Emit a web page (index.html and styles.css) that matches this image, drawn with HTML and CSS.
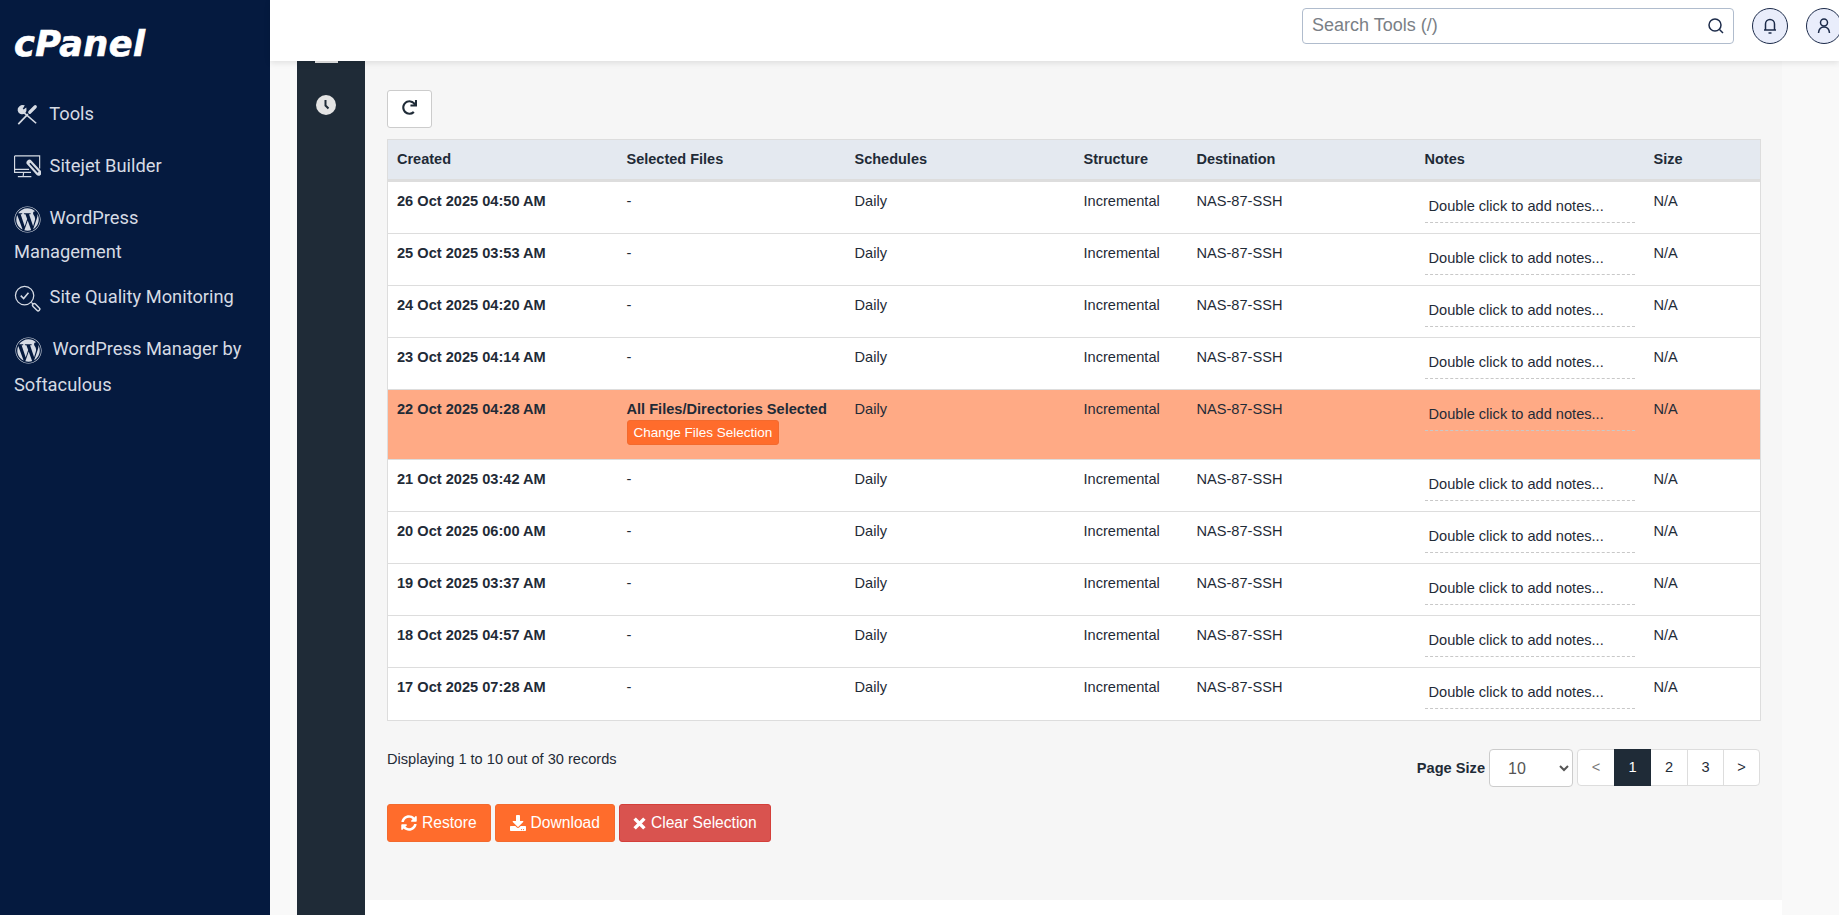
FILE: index.html
```html
<!DOCTYPE html>
<html lang="en">

<head>
    <meta charset="UTF-8">
    <meta name="viewport" content="width=device-width, initial-scale=1.0">
    <title>Backups</title>
    <link rel="stylesheet" href="styles.css">
</head>

<body>
    <aside class="sidebar">
        <div class="logo">cPanel</div>
        <nav class="nav">
            <a class="nav-item" href="#">
                <svg class="nav-icon tools" viewBox="0 0 24 24" fill="none" stroke="currentColor" stroke-width="1.800">
                    <path d="M7 8l15 13"/>
                    <path d="M2.500 22 13 11"/>
                    <path d="M15 9l6-6" stroke-width="3.500" stroke-linecap="round"/>
                    <path d="M8.500 2C5 1.500 2 4 2.500 7c.5 3 4.500 4.500 7 2.500 1.500-1.200 1.500-3 1.200-4.500L8 7 6.500 5.500z" stroke-width="1.400" fill="currentColor"/>
                </svg>
                Tools
            </a>
            <a class="nav-item" href="#">
                <svg class="nav-icon" viewBox="0 0 28 26" fill="none" stroke="currentColor" stroke-width="1.200">
                    <path d="M.6 1h26v13M.6 1v17h17"/>
                    <path d="M.6 15h15M10 18l-.5 4M4 22.500h14"/>
                    <path d="M16 8l9.500 10.500" stroke-width="6" stroke-linecap="round"/>
                    <path d="M16.500 8.500l8.500 9.500" stroke="#051a3f" stroke-width="1.500"/>
                </svg>
                Sitejet Builder
            </a>
            <a class="nav-item" href="#">
                <svg class="nav-icon" viewBox="0 0 512 512" fill="currentColor"><path d="M61.7 169.4l101.500 278C92.200 413 43.300 340.200 43.300 256c0-30.900 6.600-60.100 18.400-86.600zm337.900 75.900c0-26.300-9.400-44.500-17.500-58.700-10.800-17.500-20.900-32.400-20.900-49.900 0-19.600 14.800-37.800 35.700-37.800.9 0 1.800.1 2.800.2-37.900-34.700-88.300-55.900-143.700-55.900-74.300 0-139.700 38.100-177.800 95.900 5 .2 9.700.3 13.700.3 22.200 0 56.700-2.700 56.700-2.700 11.500-.7 12.800 16.200 1.400 17.500 0 0-11.500 1.400-24.300 2l77.500 230.400L249.800 247l-33.100-90.800c-11.500-.7-22.300-2-22.300-2-11.500-.7-10.100-18.200 1.300-17.500 0 0 35.100 2.700 56 2.700 22.200 0 56.700-2.700 56.700-2.700 11.500-.7 12.800 16.200 1.400 17.500 0 0-11.500 1.300-24.300 2l76.900 228.700 21.200-70.900c9-29.400 16-50.500 16-68.700zm-139.900 29.400l-63.800 185.500c19.100 5.600 39.200 8.700 60.100 8.700 24.800 0 48.500-4.300 70.600-12.100-.6-.9-1.100-1.900-1.500-2.900l-65.400-179.200zm183-120.700c.9 6.800 1.400 14 1.400 21.900 0 21.600-4 45.800-16.200 76.200l-65 187.900C426.200 403 468.700 334.500 468.700 256c0-37-9.400-71.800-26-102.100zM504 256c0 136.800-111.300 248-248 248C119.200 504 8 392.700 8 256 8 119.200 119.200 8 256 8c136.700 0 248 111.200 248 248zm-11.400 0c0-130.500-106.200-236.600-236.600-236.600C125.500 19.400 19.400 125.500 19.400 256S125.600 492.600 256 492.600c130.500 0 236.600-106.100 236.600-236.600z"/></svg>
                WordPress<span class="wrap">Management</span>
            </a>
            <a class="nav-item" href="#">
                <svg class="nav-icon" viewBox="0 0 28 28" fill="none" stroke="currentColor" stroke-width="1.300">
                    <circle cx="11" cy="11" r="9.500"/>
                    <path d="M7 11l3 3 5-6" stroke-width="1.600"/>
                    <path d="M18 18l2 2"/>
                    <path d="M21 21l4 4" stroke-width="5" stroke-linecap="round"/>
                    <path d="M21 21l4 4" stroke="#051a3f" stroke-width="2" stroke-linecap="round"/>
                </svg>
                Site Quality Monitoring
            </a>
            <a class="nav-item" href="#">
                <svg class="nav-icon wp-wide" viewBox="0 0 512 512" fill="currentColor"><path d="M61.7 169.4l101.500 278C92.200 413 43.300 340.200 43.300 256c0-30.900 6.600-60.100 18.400-86.600zm337.900 75.900c0-26.300-9.400-44.500-17.500-58.700-10.800-17.500-20.900-32.400-20.900-49.900 0-19.600 14.800-37.800 35.700-37.800.9 0 1.800.1 2.800.2-37.900-34.700-88.300-55.900-143.700-55.900-74.300 0-139.700 38.100-177.800 95.900 5 .2 9.700.3 13.700.3 22.200 0 56.700-2.700 56.700-2.700 11.500-.7 12.800 16.200 1.400 17.500 0 0-11.500 1.400-24.300 2l77.500 230.400L249.800 247l-33.100-90.800c-11.500-.7-22.300-2-22.300-2-11.500-.7-10.100-18.200 1.300-17.500 0 0 35.100 2.700 56 2.700 22.200 0 56.700-2.700 56.700-2.700 11.500-.7 12.800 16.200 1.400 17.500 0 0-11.500 1.300-24.300 2l76.900 228.700 21.200-70.900c9-29.400 16-50.500 16-68.700zm-139.900 29.400l-63.800 185.500c19.100 5.600 39.200 8.700 60.100 8.700 24.800 0 48.500-4.300 70.600-12.100-.6-.9-1.100-1.900-1.500-2.900l-65.400-179.200zm183-120.700c.9 6.800 1.400 14 1.400 21.900 0 21.600-4 45.800-16.200 76.200l-65 187.900C426.200 403 468.700 334.500 468.700 256c0-37-9.400-71.800-26-102.100zM504 256c0 136.800-111.300 248-248 248C119.200 504 8 392.700 8 256 8 119.200 119.200 8 256 8c136.700 0 248 111.200 248 248zm-11.400 0c0-130.500-106.200-236.600-236.600-236.600C125.500 19.400 19.400 125.500 19.400 256S125.600 492.600 256 492.600c130.500 0 236.600-106.100 236.600-236.600z"/></svg>
                WordPress Manager by<span class="wrap wrap-low">Softaculous</span>
            </a>
        </nav>
    </aside>

    <div class="main">
        <header class="topbar">
            <div class="search">
                <input class="search-input" type="text" placeholder="Search Tools (/)">
                <svg class="search-icon" viewBox="0 0 18 18" fill="none" stroke="#1c2b4a" stroke-width="1.500"><circle cx="8" cy="8" r="6"/><path d="M12.500 12.500 16 16"/></svg>
            </div>
            <button class="round-btn">
                <svg viewBox="0 0 18 18" fill="none" stroke="#1c2b4a" stroke-width="1.500"><path d="M4.500 13V7a4.500 4.500 0 0 1 9 0v6"/><path d="M3 13h12M7.500 16h3"/></svg>
            </button>
            <button class="round-btn user-btn">
                <svg viewBox="0 0 18 18" fill="none" stroke="#1c2b4a" stroke-width="1.500"><circle cx="9" cy="5.500" r="3.500"/><path d="M3.500 16c.3-3.500 2.500-6 5.500-6s5.200 2.500 5.500 6"/></svg>
            </button>
        </header>

        <div class="content">
            <div class="side-tabs">
                <span class="tab-stub"></span>
                <svg class="tab-clock" viewBox="0 0 20 20"><circle cx="10" cy="10" r="10" fill="#e4e4e4"/><path d="M9.500 5v5.500l3 3" fill="none" stroke="#1f2b37" stroke-width="2"/></svg>
            </div>
            <section class="panel">
                <button class="refresh">
                    <svg viewBox="0 0 512 512" fill="#1f2b37"><path d="M500.330 0h-47.410a12 12 0 0 0-12 12.570l4 82.760A247.420 247.420 0 0 0 256 8C119.340 8 7.900 119.530 8 256.190 8.100 393.070 119.100 504 256 504a247.100 247.100 0 0 0 166.180-63.910 12 12 0 0 0 .48-17.430l-34-34a12 12 0 0 0-16.380-.55A176 176 0 1 1 402.100 157.800l-101.530-4.870a12 12 0 0 0-12.570 12v47.410a12 12 0 0 0 12 12h200.330a12 12 0 0 0 12-12V12a12 12 0 0 0-12-12z"/></svg>
                </button>

                <table class="backups">
                    <colgroup>
                        <col class="c-created"><col class="c-files"><col class="c-sched"><col class="c-struct"><col class="c-dest"><col class="c-notes"><col class="c-size">
                    </colgroup>
                    <thead>
                        <tr><th>Created</th><th>Selected Files</th><th>Schedules</th><th>Structure</th><th>Destination</th><th>Notes</th><th>Size</th></tr>
                    </thead>
                    <tbody>
                        <tr><td class="created">26 Oct 2025 04:50 AM</td><td>-</td><td>Daily</td><td>Incremental</td><td>NAS-87-SSH</td><td><div class="note">Double click to add notes...</div></td><td>N/A</td></tr>
                        <tr><td class="created">25 Oct 2025 03:53 AM</td><td>-</td><td>Daily</td><td>Incremental</td><td>NAS-87-SSH</td><td><div class="note">Double click to add notes...</div></td><td>N/A</td></tr>
                        <tr><td class="created">24 Oct 2025 04:20 AM</td><td>-</td><td>Daily</td><td>Incremental</td><td>NAS-87-SSH</td><td><div class="note">Double click to add notes...</div></td><td>N/A</td></tr>
                        <tr><td class="created">23 Oct 2025 04:14 AM</td><td>-</td><td>Daily</td><td>Incremental</td><td>NAS-87-SSH</td><td><div class="note">Double click to add notes...</div></td><td>N/A</td></tr>
                        <tr class="selected">
                            <td class="created">22 Oct 2025 04:28 AM</td>
                            <td><div class="all-files">All Files/Directories Selected</div><button class="change-btn">Change Files Selection</button></td>
                            <td>Daily</td><td>Incremental</td><td>NAS-87-SSH</td><td><div class="note">Double click to add notes...</div></td><td>N/A</td>
                        </tr>
                        <tr><td class="created">21 Oct 2025 03:42 AM</td><td>-</td><td>Daily</td><td>Incremental</td><td>NAS-87-SSH</td><td><div class="note">Double click to add notes...</div></td><td>N/A</td></tr>
                        <tr><td class="created">20 Oct 2025 06:00 AM</td><td>-</td><td>Daily</td><td>Incremental</td><td>NAS-87-SSH</td><td><div class="note">Double click to add notes...</div></td><td>N/A</td></tr>
                        <tr><td class="created">19 Oct 2025 03:37 AM</td><td>-</td><td>Daily</td><td>Incremental</td><td>NAS-87-SSH</td><td><div class="note">Double click to add notes...</div></td><td>N/A</td></tr>
                        <tr><td class="created">18 Oct 2025 04:57 AM</td><td>-</td><td>Daily</td><td>Incremental</td><td>NAS-87-SSH</td><td><div class="note">Double click to add notes...</div></td><td>N/A</td></tr>
                        <tr><td class="created">17 Oct 2025 07:28 AM</td><td>-</td><td>Daily</td><td>Incremental</td><td>NAS-87-SSH</td><td><div class="note">Double click to add notes...</div></td><td>N/A</td></tr>
                    </tbody>
                </table>

                <div class="table-footer">
                    <div class="records">Displaying 1 to 10 out of 30 records</div>
                    <div class="paging">
                        <label class="page-size-label">Page Size</label>
                        <select class="page-size">
                            <option>10</option>
                            <option>25</option>
                            <option>50</option>
                        </select>
                        <ul class="pagination">
                            <li class="muted">&lt;</li>
                            <li class="active">1</li>
                            <li>2</li>
                            <li>3</li>
                            <li>&gt;</li>
                        </ul>
                    </div>
                </div>

                <div class="actions">
                    <button class="btn btn-orange">
                        <svg viewBox="0 0 512 512"><path d="M370.720 133.280C339.458 104.008 298.888 87.962 255.848 88c-77.458.068-144.328 53.178-162.791 126.850-1.344 5.363-6.122 9.150-11.651 9.150H24.103c-7.498 0-13.194-6.807-11.807-14.176C33.933 94.924 134.813 8 256 8c66.448 0 126.791 26.136 171.315 68.685L463.030 40.970C478.149 25.851 504 36.559 504 57.941V192c0 13.255-10.745 24-24 24H345.941c-21.382 0-32.090-25.851-16.971-40.971l41.750-41.749zM32 296h134.059c21.382 0 32.090 25.851 16.971 40.971l-41.750 41.750c31.262 29.273 71.835 45.319 114.876 45.280 77.418-.07 144.315-53.144 162.787-126.849 1.344-5.363 6.122-9.150 11.651-9.150h57.304c7.498 0 13.194 6.807 11.807 14.176C478.067 417.076 377.187 504 256 504c-66.448 0-126.791-26.136-171.315-68.685L48.970 471.030C33.851 486.149 8 475.441 8 454.059V320c0-13.255 10.745-24 24-24z"/></svg>
                        Restore
                    </button>
                    <button class="btn btn-orange">
                        <svg viewBox="0 0 512 512"><path d="M216 0h80c13.300 0 24 10.700 24 24v168h87.700c17.800 0 26.700 21.500 14.100 34.100L269.700 378.300c-7.500 7.500-19.800 7.500-27.300 0L90.100 226.100c-12.600-12.600-3.700-34.100 14.100-34.100H192V24c0-13.300 10.700-24 24-24zm296 376v112c0 13.300-10.700 24-24 24H24c-13.300 0-24-10.700-24-24V376c0-13.300 10.700-24 24-24h146.700l49 49c20.100 20.100 52.500 20.100 72.600 0l49-49H488c13.300 0 24 10.700 24 24zm-124 88c0-11-9-20-20-20s-20 9-20 20 9 20 20 20 20-9 20-20zm64 0c0-11-9-20-20-20s-20 9-20 20 9 20 20 20 20-9 20-20z"/></svg>
                        Download
                    </button>
                    <button class="btn btn-red">
                        <svg class="x-icon" viewBox="0 0 12 12"><path d="M1.500 1.500l9 9M10.500 1.500l-9 9" fill="none" stroke="#fff" stroke-width="3.200"/></svg>
                        Clear Selection
                    </button>
                </div>
            </section>
        </div>
    </div>
</body>

</html>
```

FILE: styles.css
```css
* {
    box-sizing: border-box;
}
html, body {
    margin: 0;
    height: 100%;
}
body {
    display: flex;
    height: 915px;
    overflow: hidden;
    background: #f9f9f9;
    color: #1f2b37;
    font-family: "Liberation Sans", Arial, sans-serif;
    font-size: 14.6px;
}

/* left menu */
.sidebar {
    flex: 0 0 270px;
    background: #051a3f;
    color: #d6dbe4;
    font-family: Roboto, sans-serif;
    font-size: 18.3px;
    padding: 0 14px;
}
.logo {
    margin-top: 22px;
    height: 44px;
    line-height: 44px;
    font-family: "DejaVu Sans", sans-serif;
    font-size: 35px;
    font-weight: bold;
    font-style: italic;
    letter-spacing: .5px;
    -webkit-text-stroke: .7px #fff;
    color: #fff;
}
.nav {
    margin-top: 31px;
}
.nav-item {
    display: block;
    color: inherit;
    text-decoration: none;
    line-height: 34px;
    margin-bottom: 18px;
}
.nav-item:nth-child(3) {
    margin-bottom: 11px;
}
.nav-icon {
    width: 27px;
    height: 27px;
    margin-right: 4px;
    vertical-align: middle;
}
.tools {
    width: 22px;
    height: 22px;
    margin-left: 2px;
    margin-right: 7px;
}
.wp-wide {
    margin-left: 1px;
    margin-right: 6px;
}
.wrap {
    display: block;
}
.wrap-low {
    margin-top: 2px;
}

/* top bar */
.main {
    flex: 1;
    min-width: 0;
    display: flex;
    flex-direction: column;
}
.topbar {
    position: relative;
    z-index: 2;
    flex: 0 0 61px;
    display: flex;
    align-items: center;
    justify-content: flex-end;
    gap: 18px;
    padding: 0 0 10px 0;
    background: #fff;
    box-shadow: 0 2px 6px rgba(0, 0, 0, .1);
}
.search {
    position: relative;
    flex: 0 0 432px;
    height: 36px;
}
.search-input {
    width: 100%;
    height: 100%;
    padding: 0 40px 0 9px;
    border: 1px solid #b0bccd;
    border-radius: 4px;
    font-family: "Liberation Sans", Arial, sans-serif;
    font-size: 18px;
    outline: none;
}
.search-input::placeholder {
    color: #7a7f86;
}
.search-icon {
    position: absolute;
    right: 9px;
    top: 9px;
    width: 18px;
    height: 18px;
}
.round-btn {
    flex: 0 0 36px;
    width: 36px;
    height: 36px;
    padding: 8px;
    border: 1px solid #1c2b4a;
    border-radius: 50%;
    background: #e9edfb;
}
.round-btn svg {
    display: block;
    width: 18px;
    height: 18px;
}
.user-btn {
    margin-right: -3px;
}

/* page body */
.content {
    flex: 1;
    display: flex;
    margin-left: 27px;
    margin-right: 57px;
    background: #fff;
    min-height: 0;
}
.side-tabs {
    flex: 0 0 68px;
    padding-right: 10px;
    background: #1f2b37;
    text-align: center;
}
.tab-stub {
    display: block;
    width: 23px;
    height: 2px;
    margin: 0 auto;
    background: #e4e4e4;
}
.tab-clock {
    display: block;
    width: 20px;
    height: 20px;
    margin: 32px auto 0;
}
.panel {
    flex: 1;
    min-width: 0;
    height: 839px;
    padding: 29px 22px 0;
    background: #f6f6f6;
}
.refresh {
    display: block;
    width: 45px;
    height: 38px;
    padding: 0;
    border: 1px solid #ccc;
    border-radius: 3px;
    background: #fff;
}
.refresh svg {
    display: block;
    width: 15px;
    height: 15px;
    margin: 0 auto 3px;
}

/* table */
.backups {
    width: 100%;
    margin-top: 11px;
    table-layout: fixed;
    border-collapse: collapse;
    background: #fff;
    border: 1px solid #ddd;
    font-size: 14.6px;
}
.c-created { width: 230px; }
.c-files { width: 228px; }
.c-sched { width: 229px; }
.c-struct { width: 113px; }
.c-dest { width: 228px; }
.c-notes { width: 229px; }
.c-size { width: 116px; }
.backups th {
    height: 41px;
    padding: 0 9px 2px;
    background: #e4e9f0;
    border-bottom: 3px solid #ddd;
    text-align: left;
    font-size: 14.5px;
}
.backups td {
    height: 52.1px;
    padding: 11px 9px 0;
    border-top: 1px solid #ddd;
    vertical-align: top;
    line-height: 17px;
}
.backups tbody tr:first-child td {
    height: 52.6px;
    border-top: 0;
}
.backups tbody tr:last-child td {
    height: 53px;
}
.created {
    font-weight: bold;
}
.backups .selected td {
    height: 70px;
    background: #ffaa85;
}
.all-files {
    font-weight: bold;
}
.change-btn {
    display: block;
    margin-top: 2px;
    height: 25px;
    padding: 0 6px;
    border: 1px solid #f36a2e;
    border-radius: 3px;
    background: #ff6c2c;
    color: #fff;
    font-family: "Liberation Sans", Arial, sans-serif;
    font-size: 13.5px;
}
.note {
    width: 210px;
    margin-top: 5px;
    padding: 0 4px 7px;
    border-bottom: 1px dashed #c8c8c8;
    white-space: nowrap;
}

/* footer of table */
.table-footer {
    display: flex;
    justify-content: space-between;
    margin-top: 28px;
}
.records {
    padding-top: 2px;
}
.paging {
    display: flex;
    align-items: flex-start;
    font-size: 14.6px;
}
.page-size-label {
    margin-top: 11px;
    margin-right: 4px;
    font-weight: bold;
}
.page-size {
    width: 84px;
    height: 38px;
    padding-left: 14px;
    border: 1px solid #ccc;
    border-radius: 4px;
    background: #fff;
    color: #555;
    font-family: "Liberation Sans", Arial, sans-serif;
    font-size: 16px;
}
.pagination {
    display: flex;
    margin: 0 0 0 4px;
    padding: 0;
    list-style: none;
    height: 37px;
    background: #fff;
    border: 1px solid #ddd;
    border-radius: 4px;
}
.pagination li {
    width: 36px;
    line-height: 34px;
    text-align: center;
    border-left: 1px solid #ddd;
}
.pagination li:first-child {
    border-left: 0;
}
.pagination .muted {
    color: #777;
}
.pagination .active {
    width: 37px;
    margin: -1px 0;
    line-height: 36px;
    background: #1f2b37;
    color: #fff;
    border-left: 0;
}
.pagination .active + li {
    border-left: 0;
}

/* buttons */
.actions {
    display: flex;
    gap: 4px;
    margin-top: 17px;
}
.btn {
    display: flex;
    align-items: center;
    gap: 5px;
    height: 38px;
    padding: 0 13px;
    border-radius: 3px;
    color: #fff;
    font-family: "Liberation Sans", Arial, sans-serif;
    font-size: 15.6px;
}
.btn-orange + .btn-orange {
    padding: 0 14px;
}
.btn svg {
    width: 16px;
    height: 16px;
    fill: #fff;
}
.btn .x-icon {
    width: 13px;
    height: 13px;
}
.btn-orange {
    background: #ff6c2c;
    border: 1px solid #f36a2e;
}
.btn-red {
    background: #d9534f;
    border: 1px solid #d43f3a;
}
```
